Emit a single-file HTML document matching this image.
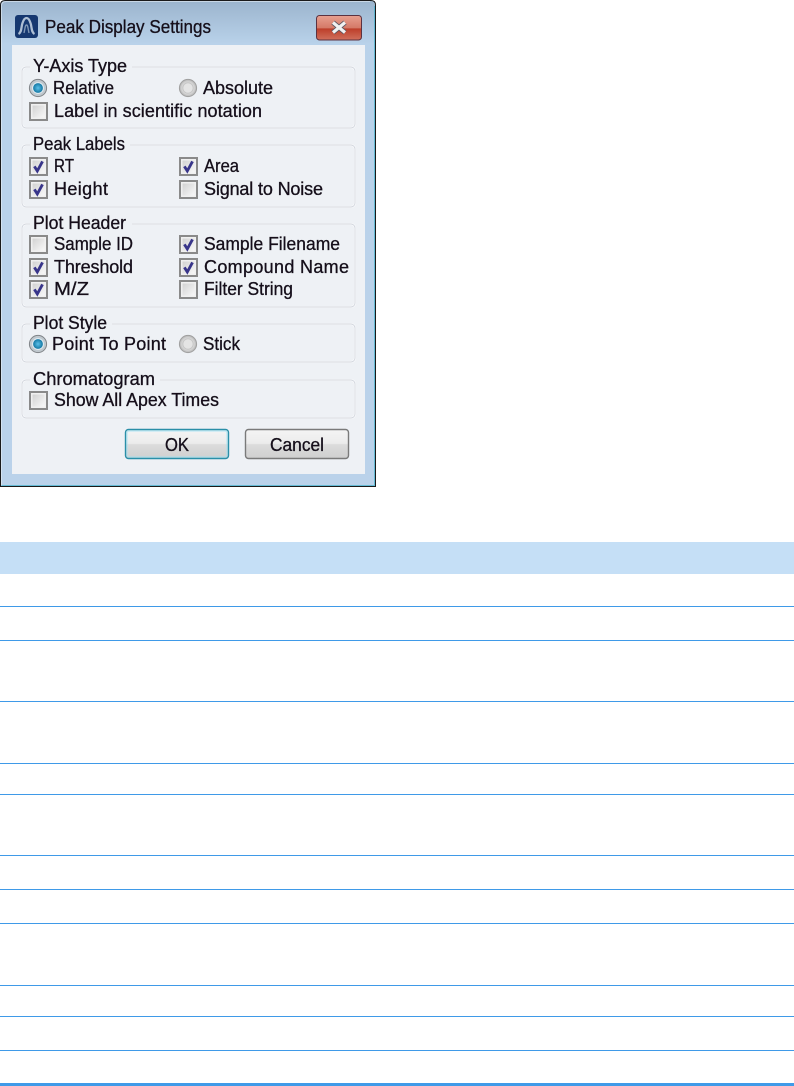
<!DOCTYPE html>
<html><head><meta charset="utf-8"><style>
html,body{margin:0;padding:0;background:#fff;width:794px;height:1086px;overflow:hidden}
svg{position:absolute;left:0;top:0;display:block}
text{font-family:"Liberation Sans",sans-serif;font-size:18px;fill:#14111a;stroke:#14111a;stroke-width:.3px}
</style></head><body>
<svg width="794" height="1086" viewBox="0 0 794 1086" xmlns="http://www.w3.org/2000/svg">
<defs>
<filter id="soft" x="-2%" y="-2%" width="104%" height="104%"><feGaussianBlur stdDeviation=".36"/></filter>
<linearGradient id="fr" x1="0" y1="0" x2="0" y2="1"><stop offset="0" stop-color="#9bb4cd"/><stop offset=".09" stop-color="#b9d2ea"/><stop offset="1" stop-color="#bad2ea"/></linearGradient>
<linearGradient id="cb" x1="0" y1="0" x2="1" y2="1"><stop offset="0" stop-color="#d2d2d2"/><stop offset="1" stop-color="#f8f8f8"/></linearGradient>
<linearGradient id="btn" x1="0" y1="0" x2="0" y2="1"><stop offset="0" stop-color="#f4f4f4"/><stop offset=".48" stop-color="#ececec"/><stop offset=".52" stop-color="#dcdcdc"/><stop offset="1" stop-color="#cfcfcf"/></linearGradient>
<linearGradient id="cl" x1="0" y1="0" x2="0" y2="1"><stop offset="0" stop-color="#e8a090"/><stop offset=".5" stop-color="#d57a68"/><stop offset=".55" stop-color="#bd3f2b"/><stop offset="1" stop-color="#d0705c"/></linearGradient>
<radialGradient id="rd"><stop offset="0" stop-color="#5cc0e8"/><stop offset="1" stop-color="#0c6f9c"/></radialGradient>
<radialGradient id="rr"><stop offset="0" stop-color="#f0f0f0"/><stop offset=".6" stop-color="#e2e2e2"/><stop offset="1" stop-color="#b4b4b4"/></radialGradient>
<g id="box"><rect x="1" y="1" width="17" height="17" fill="#f0f0f0" stroke="#8a8a8a" stroke-width="2"/><rect x="3.500" y="3.500" width="12" height="12" fill="url(#cb)"/></g>
<g id="chk"><use href="#box"/><path d="M5.400 9.400L8.300 14 13.500 4.400" fill="none" stroke="#37348a" stroke-width="2.800"/></g>
<g id="rad"><circle r="8.600" fill="url(#rr)" stroke="#a0a0a0"/><circle r="5.200" fill="#e4e4e4" stroke="#c6c6c6"/></g>
<g id="rads"><circle r="8.600" fill="#c0c8ce" stroke="#808488"/><circle r="5.400" fill="url(#rd)" stroke="#e4eef4"/></g>
</defs>
<g filter="url(#soft)">
<path d="M5 .5H371Q375.500 .5 375.500 5V486.500H.5V5Q.5 .5 5 .5Z" fill="url(#fr)"/>
<rect x="12" y="45" width="353" height="429" fill="#eef1f5"/>
<rect x="15" y="15" width="23" height="23" rx="3" fill="#12376f"/>
<path d="M18.500 34C22 32 21 27 22.500 23 23.500 20 25 18 26.500 18S29.500 20 30.500 23C32 27 31 32 34.500 34" fill="none" stroke="#aebfd4" stroke-width="2.300"/>
<path d="M24 33C25 29 25 25 26.500 25S28 29 29 33" fill="none" stroke="#7f96b4" stroke-width="1.400"/>
<text x="45" y="33" textLength="166" lengthAdjust="spacingAndGlyphs">Peak Display Settings</text>
<rect x="316.500" y="15.500" width="45" height="24.500" rx="3" fill="url(#cl)" stroke="#5c3340"/>
<path d="M333 22.500L345 32.500M345 22.500L333 32.500" stroke="#5a5560" stroke-width="5"/>
<path d="M333 22.500L345 32.500M345 22.500L333 32.500" stroke="#f1f1f1" stroke-width="3.200"/>
<g fill="none" stroke="#fdfdfe" stroke-width="2">
<rect x="22" y="67" width="333" height="61" rx="4"/>
<rect x="22" y="145" width="333" height="62" rx="4"/>
<rect x="22" y="224" width="333" height="83" rx="4"/>
<rect x="22" y="324" width="333" height="38" rx="4"/>
<rect x="22" y="380" width="333" height="38" rx="4"/>
</g>
<g fill="none" stroke="#ced3db" stroke-width=".9">
<rect x="22" y="67" width="333" height="61" rx="4"/>
<rect x="22" y="145" width="333" height="62" rx="4"/>
<rect x="22" y="224" width="333" height="83" rx="4"/>
<rect x="22" y="324" width="333" height="38" rx="4"/>
<rect x="22" y="380" width="333" height="38" rx="4"/>
</g>
<g fill="#eef1f5">
<rect x="30" y="60" width="102" height="14"/>
<rect x="30" y="138" width="100" height="14"/>
<rect x="30" y="217" width="102" height="14"/>
<rect x="30" y="317" width="82" height="14"/>
<rect x="30" y="373" width="130" height="14"/>
</g>
<g lengthAdjust="spacingAndGlyphs">
<text x="33" y="72" textLength="94" lengthAdjust="spacingAndGlyphs">Y-Axis Type</text>
<text x="33" y="150" textLength="92" lengthAdjust="spacingAndGlyphs">Peak Labels</text>
<text x="33" y="229" textLength="93" lengthAdjust="spacingAndGlyphs">Plot Header</text>
<text x="33" y="329" textLength="74" lengthAdjust="spacingAndGlyphs">Plot Style</text>
<text x="33" y="385" textLength="122" lengthAdjust="spacingAndGlyphs">Chromatogram</text>
</g>
<use href="#rads" x="38" y="88"/><use href="#rad" x="188" y="88"/>
<use href="#box" x="29" y="102"/>
<use href="#chk" x="29" y="157"/><use href="#chk" x="179" y="157"/>
<use href="#chk" x="29" y="180"/><use href="#box" x="179" y="180"/>
<use href="#box" x="29" y="235"/><use href="#chk" x="179" y="235"/>
<use href="#chk" x="29" y="258"/><use href="#chk" x="179" y="258"/>
<use href="#chk" x="29" y="280"/><use href="#box" x="179" y="280"/>
<use href="#rads" x="38" y="344"/><use href="#rad" x="188" y="344"/>
<use href="#box" x="29" y="391"/>
<text x="53" y="94" textLength="61" lengthAdjust="spacingAndGlyphs">Relative</text>
<text x="203" y="94" textLength="70" lengthAdjust="spacingAndGlyphs">Absolute</text>
<text x="54" y="117" textLength="208">Label in scientific notation</text>
<text x="54" y="172" textLength="20" lengthAdjust="spacingAndGlyphs">RT</text>
<text x="204" y="172" textLength="35" lengthAdjust="spacingAndGlyphs">Area</text>
<text x="54" y="195" textLength="54">Height</text>
<text x="204" y="195" textLength="119">Signal to Noise</text>
<text x="54" y="250" textLength="79" lengthAdjust="spacingAndGlyphs">Sample ID</text>
<text x="204" y="250" textLength="136" lengthAdjust="spacingAndGlyphs">Sample Filename</text>
<text x="54" y="273" textLength="79">Threshold</text>
<text x="204" y="273" textLength="145">Compound Name</text>
<text x="54" y="295" textLength="35" lengthAdjust="spacingAndGlyphs">M/Z</text>
<text x="204" y="295" textLength="89" lengthAdjust="spacingAndGlyphs">Filter String</text>
<text x="52" y="350" textLength="114">Point To Point</text>
<text x="203" y="350" textLength="37" lengthAdjust="spacingAndGlyphs">Stick</text>
<text x="54" y="406" textLength="165" lengthAdjust="spacingAndGlyphs">Show All Apex Times</text>
<rect x="125.500" y="429.500" width="103" height="29" rx="3" fill="url(#btn)" stroke="#2c8fa8" stroke-width="1.400"/>
<rect x="127" y="431" width="100" height="26" rx="2" fill="none" stroke="#9fe2f4" stroke-opacity=".8"/>
<rect x="245.500" y="429.500" width="103" height="29" rx="3" fill="url(#btn)" stroke="#7a7a7a" stroke-width="1.400"/>
<text x="165" y="451" textLength="24" lengthAdjust="spacingAndGlyphs">OK</text>
<text x="270" y="451" textLength="54" lengthAdjust="spacingAndGlyphs">Cancel</text>
</g>
<path d="M5 .5H371Q375.500 .5 375.500 5V486.500H.5V5Q.5 .5 5 .5Z" fill="none" stroke="#1a1a1a"/>
<path d="M1.500 485.500H374.500V6" fill="none" stroke="#42b0cc" stroke-opacity=".7"/>
<path d="M1.500 485V6Q1.500 1.500 6 1.500H370" fill="none" stroke="#e6eef5" stroke-opacity=".6"/>
<rect x="0" y="542" width="794" height="32" fill="#c5dff6"/>
<g fill="#3f9ae8">
<rect x="0" y="606" width="794" height="1"/>
<rect x="0" y="640" width="794" height="1"/>
<rect x="0" y="701" width="794" height="1"/>
<rect x="0" y="763" width="794" height="1"/>
<rect x="0" y="794" width="794" height="1"/>
<rect x="0" y="855" width="794" height="1"/>
<rect x="0" y="889" width="794" height="1"/>
<rect x="0" y="923" width="794" height="1"/>
<rect x="0" y="985" width="794" height="1"/>
<rect x="0" y="1016" width="794" height="1"/>
<rect x="0" y="1050" width="794" height="1"/>
<rect x="0" y="1083" width="794" height="3"/>
</g>
</svg>
</body></html>
